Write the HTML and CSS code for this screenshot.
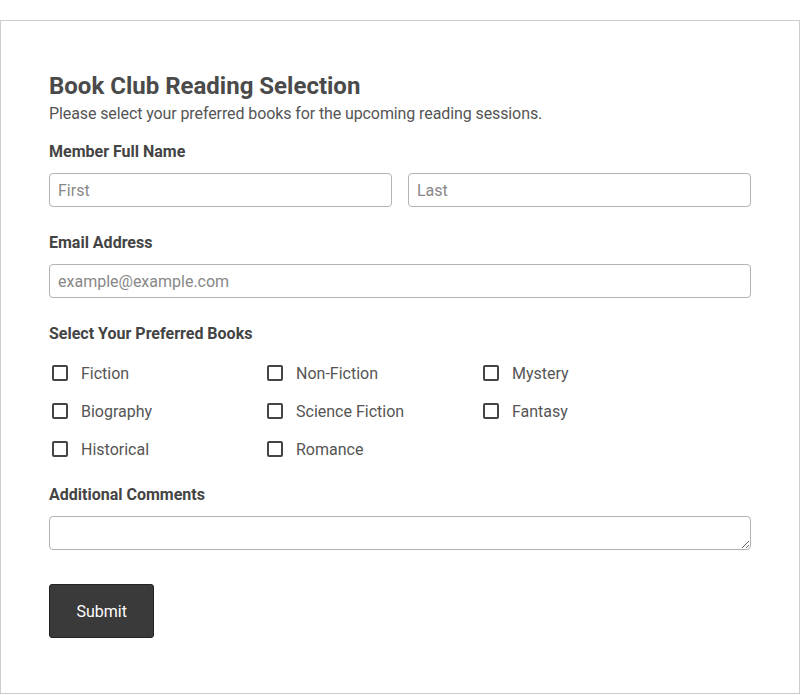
FILE: index.html
```html
<!DOCTYPE html>
<html lang="en">
<head>
    <meta charset="UTF-8">
    <meta name="viewport" content="width=device-width, initial-scale=1.0">
    <title>Book Club Reading Selection</title>
    <link rel="stylesheet" href="styles.css">
</head>
<body>
    <form class="form-container">
        <h1>Book Club Reading Selection</h1>
        <p class="subtitle">Please select your preferred books for the upcoming reading sessions.</p>

        <div class="field">
            <label class="field-label">Member Full Name</label>
            <div class="name-row">
                <input type="text" class="text-input" placeholder="First">
                <input type="text" class="text-input" placeholder="Last">
            </div>
        </div>

        <div class="field">
            <label class="field-label">Email Address</label>
            <input type="email" class="text-input" placeholder="example@example.com">
        </div>

        <div class="field">
            <label class="field-label">Select Your Preferred Books</label>
            <div class="book-grid">
                <label class="check-item"><input type="checkbox"> Fiction</label>
                <label class="check-item"><input type="checkbox"> Non-Fiction</label>
                <label class="check-item"><input type="checkbox"> Mystery</label>
                <label class="check-item"><input type="checkbox"> Biography</label>
                <label class="check-item"><input type="checkbox"> Science Fiction</label>
                <label class="check-item"><input type="checkbox"> Fantasy</label>
                <label class="check-item"><input type="checkbox"> Historical</label>
                <label class="check-item"><input type="checkbox"> Romance</label>
            </div>
        </div>

        <div class="field field-comments">
            <label class="field-label">Additional Comments</label>
            <textarea class="text-input comments" rows="1"></textarea>
        </div>

        <button type="button" class="submit-btn">Submit</button>
    </form>
</body>
</html>
```

FILE: styles.css
```css
body {
    margin: 20px 0 0 0;
    font-family: Roboto, "Liberation Sans", sans-serif;
    color: #444;
    background: #fff;
}

.form-container {
    box-sizing: border-box;
    width: 800px;
    height: 674px;
    border: 1px solid #ccc;
    padding: 51px 48px 0 48px;
}

h1 {
    margin: 0;
    font-size: 24px;
    line-height: 29px;
    font-weight: 700;
    color: #4a4a4a;
}

.subtitle {
    margin: 1px 0 0 0;
    font-size: 16px;
    line-height: 24px;
    letter-spacing: -0.1px;
    color: #555;
}

.field {
    margin-top: 24px;
}

.subtitle + .field {
    margin-top: 14px;
}

.field-comments {
    margin-top: 22px;
}

.field-label {
    display: block;
    font-size: 16px;
    line-height: 24px;
    font-weight: 700;
    color: #444;
    margin-bottom: 9px;
}

.name-row {
    display: flex;
    gap: 16px;
}

.text-input {
    box-sizing: border-box;
    display: block;
    width: 100%;
    height: 34px;
    margin: 0;
    padding: 0 8px;
    border: 1px solid #b3b3b3;
    border-radius: 4px;
    font-family: Roboto, "Liberation Sans", sans-serif;
    font-size: 16px;
    color: #444;
    background: #fff;
}

.text-input::placeholder {
    color: #888;
}

.comments {
    resize: vertical;
    padding: 6px 8px;
}

.book-grid {
    display: grid;
    grid-template-columns: 215px 216px 1fr;
    row-gap: 14px;
    margin-top: 15px;
}

.check-item {
    display: flex;
    align-items: center;
    height: 24px;
    font-size: 16px;
    color: #555;
}

.check-item input {
    appearance: none;
    -webkit-appearance: none;
    box-sizing: border-box;
    width: 16px;
    height: 16px;
    margin: 0 13px 0 3px;
    border: 2px solid #444;
    border-radius: 2px;
    background: #fff;
}

.submit-btn {
    margin-top: 34px;
    height: 54px;
    padding: 0 26.5px;
    background: #3a3a3a;
    color: #fff;
    border: 1px solid #222;
    border-radius: 3px;
    font-family: Roboto, "Liberation Sans", sans-serif;
    font-size: 16px;
}
```
